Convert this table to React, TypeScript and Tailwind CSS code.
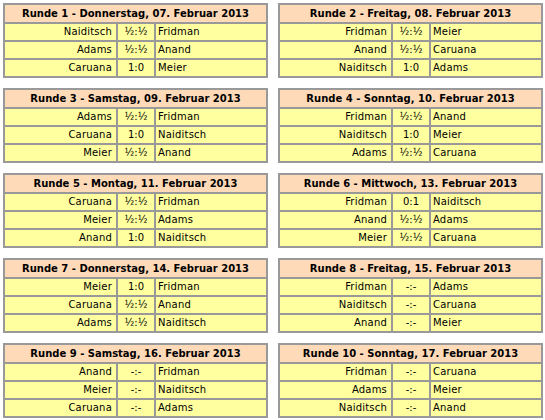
import React from 'react';

type Game = [string, string, string];

const rounds: { title: string; games: Game[] }[] = [
  { title: 'Runde 1 - Donnerstag, 07. Februar 2013', games: [['Naiditsch', '½:½', 'Fridman'], ['Adams', '½:½', 'Anand'], ['Caruana', '1:0', 'Meier']] },
  { title: 'Runde 2 - Freitag, 08. Februar 2013', games: [['Fridman', '½:½', 'Meier'], ['Anand', '½:½', 'Caruana'], ['Naiditsch', '1:0', 'Adams']] },
  { title: 'Runde 3 - Samstag, 09. Februar 2013', games: [['Adams', '½:½', 'Fridman'], ['Caruana', '1:0', 'Naiditsch'], ['Meier', '½:½', 'Anand']] },
  { title: 'Runde 4 - Sonntag, 10. Februar 2013', games: [['Fridman', '½:½', 'Anand'], ['Naiditsch', '1:0', 'Meier'], ['Adams', '½:½', 'Caruana']] },
  { title: 'Runde 5 - Montag, 11. Februar 2013', games: [['Caruana', '½:½', 'Fridman'], ['Meier', '½:½', 'Adams'], ['Anand', '1:0', 'Naiditsch']] },
  { title: 'Runde 6 - Mittwoch, 13. Februar 2013', games: [['Fridman', '0:1', 'Naiditsch'], ['Anand', '½:½', 'Adams'], ['Meier', '½:½', 'Caruana']] },
  { title: 'Runde 7 - Donnerstag, 14. Februar 2013', games: [['Meier', '1:0', 'Fridman'], ['Caruana', '½:½', 'Anand'], ['Adams', '½:½', 'Naiditsch']] },
  { title: 'Runde 8 - Freitag, 15. Februar 2013', games: [['Fridman', '-:-', 'Adams'], ['Naiditsch', '-:-', 'Caruana'], ['Anand', '-:-', 'Meier']] },
  { title: 'Runde 9 - Samstag, 16. Februar 2013', games: [['Anand', '-:-', 'Fridman'], ['Meier', '-:-', 'Naiditsch'], ['Caruana', '-:-', 'Adams']] },
  { title: 'Runde 10 - Sonntag, 17. Februar 2013', games: [['Fridman', '-:-', 'Caruana'], ['Adams', '-:-', 'Meier'], ['Naiditsch', '-:-', 'Anand']] },
];

function RoundTable({ title, games }: { title: string; games: Game[] }) {
  return (
    <div className="border-2 border-[#999999] bg-[#999999]">
      <div className="h-[17px] bg-[#ffdab9] text-center font-bold leading-[17px]">{title}</div>
      {games.map((g, i) => (
        <div key={i} className="mt-[2px] grid h-[16px] grid-cols-[111px_36px_1fr] gap-x-[2px] leading-[16px]">
          <div className="bg-[#ffffa0] pr-[4px] text-right tracking-[0.2px]">{g[0]}</div>
          <div className="bg-[#ffffa0] text-center">{g[1]}</div>
          <div className="bg-[#ffffa0] pl-[2px] tracking-[0.2px]">{g[2]}</div>
        </div>
      ))}
    </div>
  );
}

export default function App() {
  return (
    <div className="h-[420px] w-[545px] bg-white p-[3px] text-[10px] text-black" style={{ fontFamily: '"DejaVu Sans", Verdana, sans-serif' }}>
      <div className="grid grid-cols-[265px_265px] gap-x-[10px] gap-y-[10px]">
        {rounds.map((r) => (
          <RoundTable key={r.title} title={r.title} games={r.games} />
        ))}
      </div>
    </div>
  );
}
